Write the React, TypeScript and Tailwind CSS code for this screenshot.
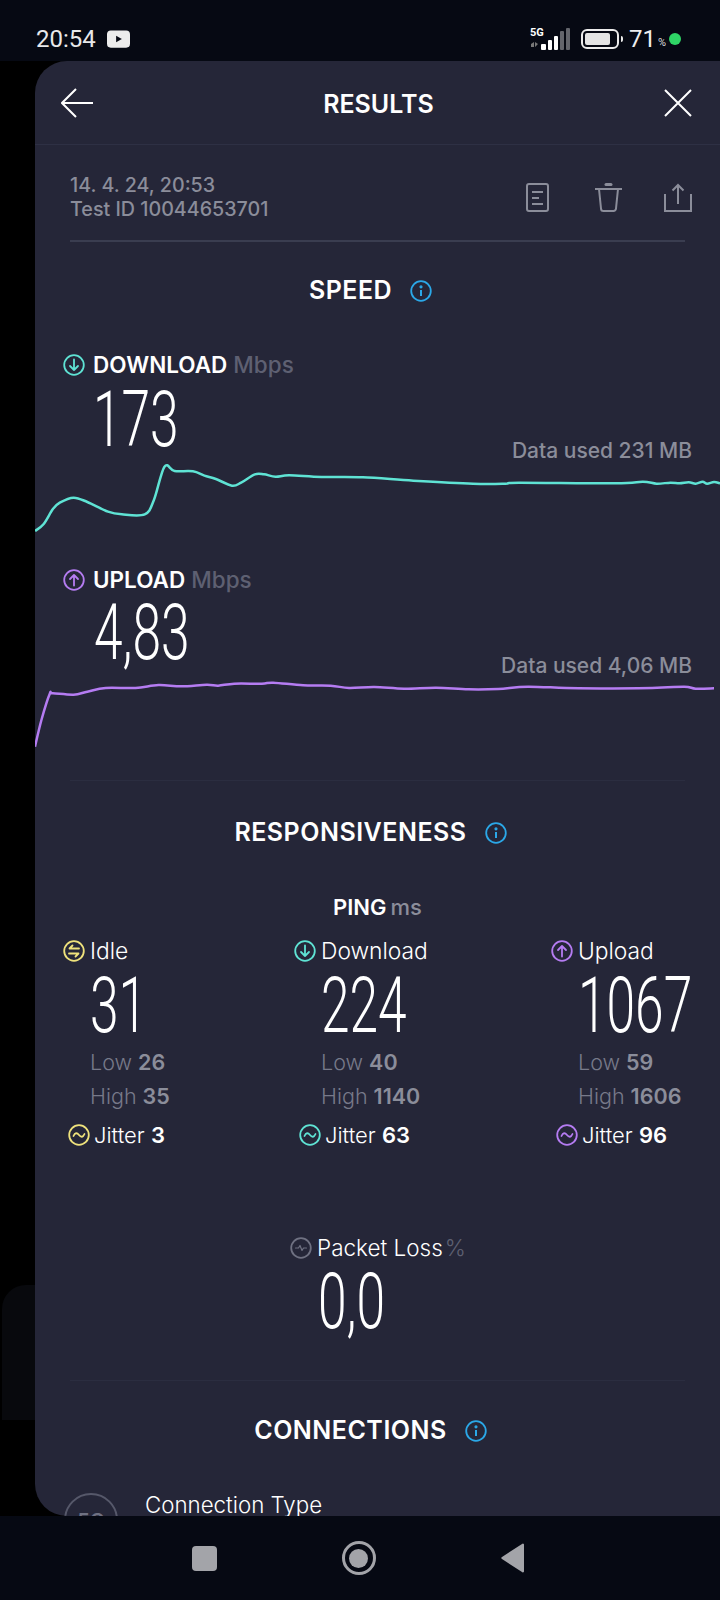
import type { ReactNode } from "react";

const downloadLine: [number, number][] = [
  [76, 603], [95, 582], [115, 537], [130, 518], [160, 503], [190, 516], [235, 545], [265, 553], [315, 553], [335, 510],
  [358, 410], [380, 423], [420, 424], [445, 437], [470, 447], [505, 467], [525, 458], [555, 433], [575, 433], [600, 440],
  [630, 436], [700, 441], [790, 442], [900, 452], [1030, 461], [1100, 461], [1130, 458], [1340, 460], [1400, 455],
  [1430, 461], [1460, 458], [1480, 460], [1500, 457], [1515, 461], [1530, 455], [1540, 461], [1555, 456], [1568, 460],
];

const uploadLine: [number, number][] = [
  [76, 590], [90, 510], [108, 432], [115, 430], [160, 434], [190, 425], [230, 414], [295, 414], [345, 405], [395, 409],
  [450, 404], [475, 407], [510, 401], [570, 401], [595, 398], [660, 406], [720, 407], [760, 414], [815, 411], [880, 416],
  [950, 413], [1020, 418], [1085, 417], [1150, 410], [1260, 415], [1420, 414], [1490, 410], [1515, 416], [1555, 415],
];

// soft curve through the sampled points
function toPath(pts: [number, number][]) {
  let d = `M${pts[0][0]} ${pts[0][1]}`;
  for (let i = 0; i < pts.length - 1; i++) {
    const p0 = pts[i - 1] ?? pts[i];
    const p1 = pts[i];
    const p2 = pts[i + 1];
    const p3 = pts[i + 2] ?? p2;
    const c1x = p1[0] + (p2[0] - p0[0]) / 6;
    const c1y = p1[1] + (p2[1] - p0[1]) / 6;
    const c2x = p2[0] - (p3[0] - p1[0]) / 6;
    const c2y = p2[1] - (p3[1] - p1[1]) / 6;
    d += ` C${c1x} ${c1y} ${c2x} ${c2y} ${p2[0]} ${p2[1]}`;
  }
  return d;
}

function Graph({ pts, color, viewBox, className }: { pts: [number, number][]; color: string; viewBox: string; className: string }) {
  return (
    <svg viewBox={viewBox} preserveAspectRatio="none" className={className} aria-hidden="true">
      <path d={toPath(pts)} fill="none" stroke={color} strokeWidth={2.5} vectorEffect="non-scaling-stroke" />
    </svg>
  );
}

function RingIcon({ color, children, className = "w-[22px] h-[22px]" }: { color: string; children: ReactNode; className?: string }) {
  return (
    <svg viewBox="0 0 22 22" className={`${className} shrink-0`} fill="none" stroke={color} strokeWidth={1.8} strokeLinecap="round" strokeLinejoin="round" aria-hidden="true">
      <circle cx="11" cy="11" r="9.8" />
      {children}
    </svg>
  );
}

const DownGlyph = () => <path d="M11 5.500v10.500M7 12l4 4 4-4" />;
const UpGlyph = () => <path d="M11 16.500V6M7 10l4-4 4 4" />;
const IdleGlyph = () => <path d="M16 8.500H6.500l3-3M6 13.500h9.500l-3 3" />;
const JitterGlyph = () => <path d="M5.500 12c1.500-3.500 3.500-3.500 5.500-1s4 2.500 5.500-1" />;

function InfoIcon() {
  return (
    <svg viewBox="0 0 22 22" className="w-[22px] h-[22px] shrink-0" fill="none" stroke="#2ba8e8" strokeWidth={1.8} aria-hidden="true">
      <circle cx="11" cy="11" r="9.8" />
      <path d="M11 10v6" strokeWidth={2} />
      <circle cx="11" cy="6.800" r="0.7" fill="#2ba8e8" />
    </svg>
  );
}

function Heading({ title }: { title: string }) {
  return (
    <div className="flex h-[30px] items-center justify-center gap-[18px] pr-[14px] text-[25px] font-semibold tracking-[0.5px] text-white">
      <span>{title}</span>
      <InfoIcon />
    </div>
  );
}

function BigNumber({ value }: { value: string }) {
  return (
    <div className="inline-block origin-left scale-x-[0.66] font-['Roboto',sans-serif] text-[78px] font-light leading-[76px] text-white whitespace-nowrap">
      {value}
    </div>
  );
}

interface PingColumn {
  label: string;
  value: string;
  low: string;
  high: string;
  jitter: string;
  color: string;
  glyph: ReactNode;
}

const pingColumns: PingColumn[] = [
  { label: "Idle", value: "31", low: "26", high: "35", jitter: "3", color: "#efe27c", glyph: <IdleGlyph /> },
  { label: "Download", value: "224", low: "40", high: "1140", jitter: "63", color: "#5fe3d4", glyph: <DownGlyph /> },
  { label: "Upload", value: "1067", low: "59", high: "1606", jitter: "96", color: "#b57cf2", glyph: <UpGlyph /> },
];

export default function App() {
  return (
    <div className="flex h-[1600px] w-[720px] flex-col overflow-hidden bg-black font-['Inter',sans-serif]">
      {/* Status bar */}
      <div className="flex h-[61px] shrink-0 items-center bg-[#060913] pl-[36px] pr-[39px] pt-[17px]">
        <span className="font-['Roboto',sans-serif] text-[24px] text-[#e8e8ea]">20:54</span>
        <svg viewBox="0 0 24 18" className="ml-[11px] h-[18px] w-[23px]" aria-hidden="true">
          <rect width="24" height="18" rx="4" fill="#ececec" />
          <path d="M9.500 5.500l6 3.500-6 3.500z" fill="#060913" />
        </svg>
        <div className="ml-auto flex items-center">
          <div className="relative h-[22px] w-[42px]">
            <span className="absolute left-0 top-[-3px] font-['Roboto',sans-serif] text-[11px] font-bold text-white">5G</span>
            <svg viewBox="0 0 42 22" className="h-[22px] w-[42px]" aria-hidden="true">
              <path d="M1 16l3-2v5H1zM5 14l3 2-3 3z" fill="#777" />
              <rect x="11" y="16" width="5" height="6" rx="1" fill="#fff" />
              <rect x="18" y="12" width="4" height="10" rx="1" fill="#fff" />
              <rect x="24" y="8" width="4" height="14" rx="1" fill="#fff" />
              <rect x="30" y="3" width="4" height="19" rx="1" fill="#63656c" />
              <rect x="36" y="0" width="4" height="22" rx="1" fill="#63656c" />
            </svg>
          </div>
          <div className="ml-[9px] flex h-[20px] w-[38px] items-center rounded-[6px] border-2 border-[#ececec] p-[2px]">
            <div className="h-full w-[25px] rounded-[2px] bg-[#e4e4e4]" />
          </div>
          <div className="ml-[2px] h-[6px] w-[2px] rounded-r bg-[#ececec]" />
          <span className="ml-[6px] font-['Roboto',sans-serif] text-[24px] text-[#eeeeee]">71</span>
          <span className="ml-[2px] mt-[8px] font-['Roboto',sans-serif] text-[11px] text-[#dddddd]">%</span>
          <div className="ml-[3px] h-[12px] w-[12px] rounded-full bg-[#2fd566]" />
        </div>
      </div>

      {/* Main area */}
      <div className="flex min-h-0 flex-1">
        <div className="relative w-[35px] shrink-0">
          <div className="absolute left-[2px] top-[1224px] h-[135px] w-[33px] rounded-tl-[24px] bg-[#08090d]" />
        </div>
        <div className="h-[1455px] w-[685px] overflow-hidden rounded-l-[32px] bg-[#252638]">
          {/* Title bar */}
          <div className="flex h-[84px] items-center justify-between border-b border-[#2e3044] pl-[26px] pr-[28px]">
            <svg viewBox="0 0 32 30" className="h-[30px] w-[32px]" fill="none" stroke="#fff" strokeWidth={2} aria-hidden="true">
              <path d="M15 1L1 15l14 14M1 15h31" />
            </svg>
            <span className="pt-[5px] text-[25px] font-semibold text-white">RESULTS</span>
            <svg viewBox="0 0 28 28" className="h-[28px] w-[28px]" fill="none" stroke="#fff" strokeWidth={2} aria-hidden="true">
              <path d="M1 1l26 26M27 1L1 27" />
            </svg>
          </div>

          {/* Test info */}
          <div className="flex items-center justify-between pl-[35px] pr-[28px] pt-[28px]">
            <div className="text-[19.700px] font-medium leading-[24px] text-[#8b8d9a]">
              <div>14. 4. 24, 20:53</div>
              <div>Test ID 10044653701</div>
            </div>
            <div className="flex items-center gap-[42px]">
              <svg viewBox="0 0 23 29" className="mr-[4px] h-[29px] w-[23px]" fill="none" stroke="#8b8d9a" strokeWidth={2} aria-hidden="true">
                <rect x="1" y="1" width="21" height="27" rx="2" />
                <path d="M6 9h11M6 15h7M6 21h11" />
              </svg>
              <svg viewBox="0 0 27 29" className="h-[29px] w-[27px]" fill="none" stroke="#8b8d9a" strokeWidth={2} aria-hidden="true">
                <path d="M0 6h27M4 6l2 19.500a2.500 2.500 0 0 0 2.500 2.500h10a2.500 2.500 0 0 0 2.500-2.500L23 6" />
                <path d="M11 1.500h5" strokeWidth={3} strokeLinecap="round" />
              </svg>
              <svg viewBox="0 0 28 29" className="h-[29px] w-[28px]" fill="none" stroke="#8b8d9a" strokeWidth={2} aria-hidden="true">
                <path d="M1 11v17h26V11M14 21V2M8.500 7.500L14 2l5.500 5.500" />
              </svg>
            </div>
          </div>
          <div className="mx-[35px] mt-[19px] h-[2px] bg-[#3a3d50]" />

          {/* Speed */}
          <div className="mt-[34px]">
            <Heading title="SPEED" />
          </div>

          <div className="mt-[46px] flex h-[26px] items-center pl-[28px] text-[22.500px]">
            <RingIcon color="#5fe3d4"><DownGlyph /></RingIcon>
            <span className="ml-[8px] font-semibold text-white">DOWNLOAD</span>
            <span className="ml-[6px] font-medium text-[#5e6072]">Mbps</span>
          </div>
          <div className="mt-[4px] flex h-[76px] items-end justify-between pl-[58px] pr-[28px]">
            <BigNumber value="173" />
            <span className="-mb-[5px] text-[21px] font-medium leading-[24px] text-[#8b8d9a]">Data used 231 MB</span>
          </div>
          <Graph pts={downloadLine} color="#5fe3d4" viewBox="76 384 1492 255" className="block h-[85px] w-full" />

          <div className="mt-[24px] flex h-[26px] items-center pl-[28px] text-[22.500px]">
            <RingIcon color="#b57cf2"><UpGlyph /></RingIcon>
            <span className="ml-[8px] font-semibold text-white">UPLOAD</span>
            <span className="ml-[6px] font-medium text-[#5e6072]">Mbps</span>
          </div>
          <div className="mt-[3px] flex h-[75px] items-end justify-between pl-[59px] pr-[28px]">
            <BigNumber value="4,83" />
            <span className="-mb-[7px] text-[21px] font-medium leading-[24px] text-[#8b8d9a]">Data used 4,06 MB</span>
          </div>
          <Graph pts={uploadLine} color="#b57cf2" viewBox="76 363 1492 240" className="block h-[80px] w-full" />

          <div className="mx-[35px] mt-[29px] h-px bg-[#2b2d40]" />

          {/* Responsiveness */}
          <div className="mt-[37px]">
            <Heading title="RESPONSIVENESS" />
          </div>

          <div className="mt-[46px] flex h-[26px] items-center justify-center gap-[4px] text-[22px]">
            <span className="font-semibold text-white">PING</span>
            <span className="font-medium text-[#8b8d9a]">ms</span>
          </div>

          <div className="mt-[18px] grid grid-cols-[231px_257px_1fr] pl-[28px]">
            {pingColumns.map((col) => (
              <div key={col.label}>
                <div className="flex h-[26px] items-center gap-[5px] text-[22.800px] font-light text-white">
                  <RingIcon color={col.color}>{col.glyph}</RingIcon>
                  <span>{col.label}</span>
                </div>
                <div className="mt-[4px] h-[76px] pl-[27px]">
                  <BigNumber value={col.value} />
                </div>
                <div className="mt-[6px] pl-[27px] text-[21.500px] font-light leading-[24px] text-[#777989]">
                  Low <span className="font-semibold text-[#8b8d9a]">{col.low}</span>
                </div>
                <div className="mt-[10px] pl-[27px] text-[21.500px] font-light leading-[24px] text-[#777989]">
                  High <span className="font-semibold text-[#8b8d9a]">{col.high}</span>
                </div>
                <div className="mt-[14px] flex h-[26px] items-center gap-[4px] pl-[5px] text-[22px] font-light text-white">
                  <RingIcon color={col.color}><JitterGlyph /></RingIcon>
                  <span>
                    Jitter <span className="font-semibold">{col.jitter}</span>
                  </span>
                </div>
              </div>
            ))}
          </div>

          {/* Packet loss */}
          <div className="mt-[87px] flex h-[26px] items-center pl-[255px] text-[22.500px] font-light">
            <RingIcon color="#6f7182">
              <path d="M5.500 11h3l1.500-2.500 2 5 1.500-2.500h3" strokeWidth={1.2} />
            </RingIcon>
            <span className="ml-[5px] text-white">Packet Loss</span>
            <span className="ml-[2px] text-[#5e6072]">%</span>
          </div>
          <div className="mt-[3px] h-[76px] pl-[283px]">
            <BigNumber value="0,0" />
          </div>
          <div className="mx-[35px] mt-[40px] h-px bg-[#2b2d40]" />

          {/* Connections */}
          <div className="mt-[35px]">
            <Heading title="CONNECTIONS" />
          </div>
          <div className="mt-[46px] flex pl-[29px]">
            <div className="mt-[1px] flex h-[54px] w-[54px] shrink-0 items-start justify-center rounded-full border-2 border-[#56586a] pt-[14px] text-[20px] font-semibold leading-[24px] text-[#6f7182]">
              5G
            </div>
            <span className="ml-[27px] text-[22.300px] font-light leading-[26px] text-white">Connection Type</span>
          </div>
        </div>
      </div>

      {/* Nav bar */}
      <div className="flex h-[84px] shrink-0 items-center justify-center gap-[125px] bg-[#060913] pr-[4px]">
        <div className="h-[25px] w-[25px] rounded-[4px] bg-[#a3a4a9]" />
        <div className="flex h-[34px] w-[34px] items-center justify-center rounded-full border-[3px] border-[#a3a4a9]">
          <div className="h-[19px] w-[19px] rounded-full bg-[#a3a4a9]" />
        </div>
        <svg viewBox="0 0 24 30" className="h-[30px] w-[24px]" aria-hidden="true">
          <path d="M23 1.500v27a1 1 0 0 1-1.600.7L1 16a1.200 1.200 0 0 1 0-2L21.400.800a1 1 0 0 1 1.600.7z" fill="#a3a4a9" />
        </svg>
      </div>
    </div>
  );
}
